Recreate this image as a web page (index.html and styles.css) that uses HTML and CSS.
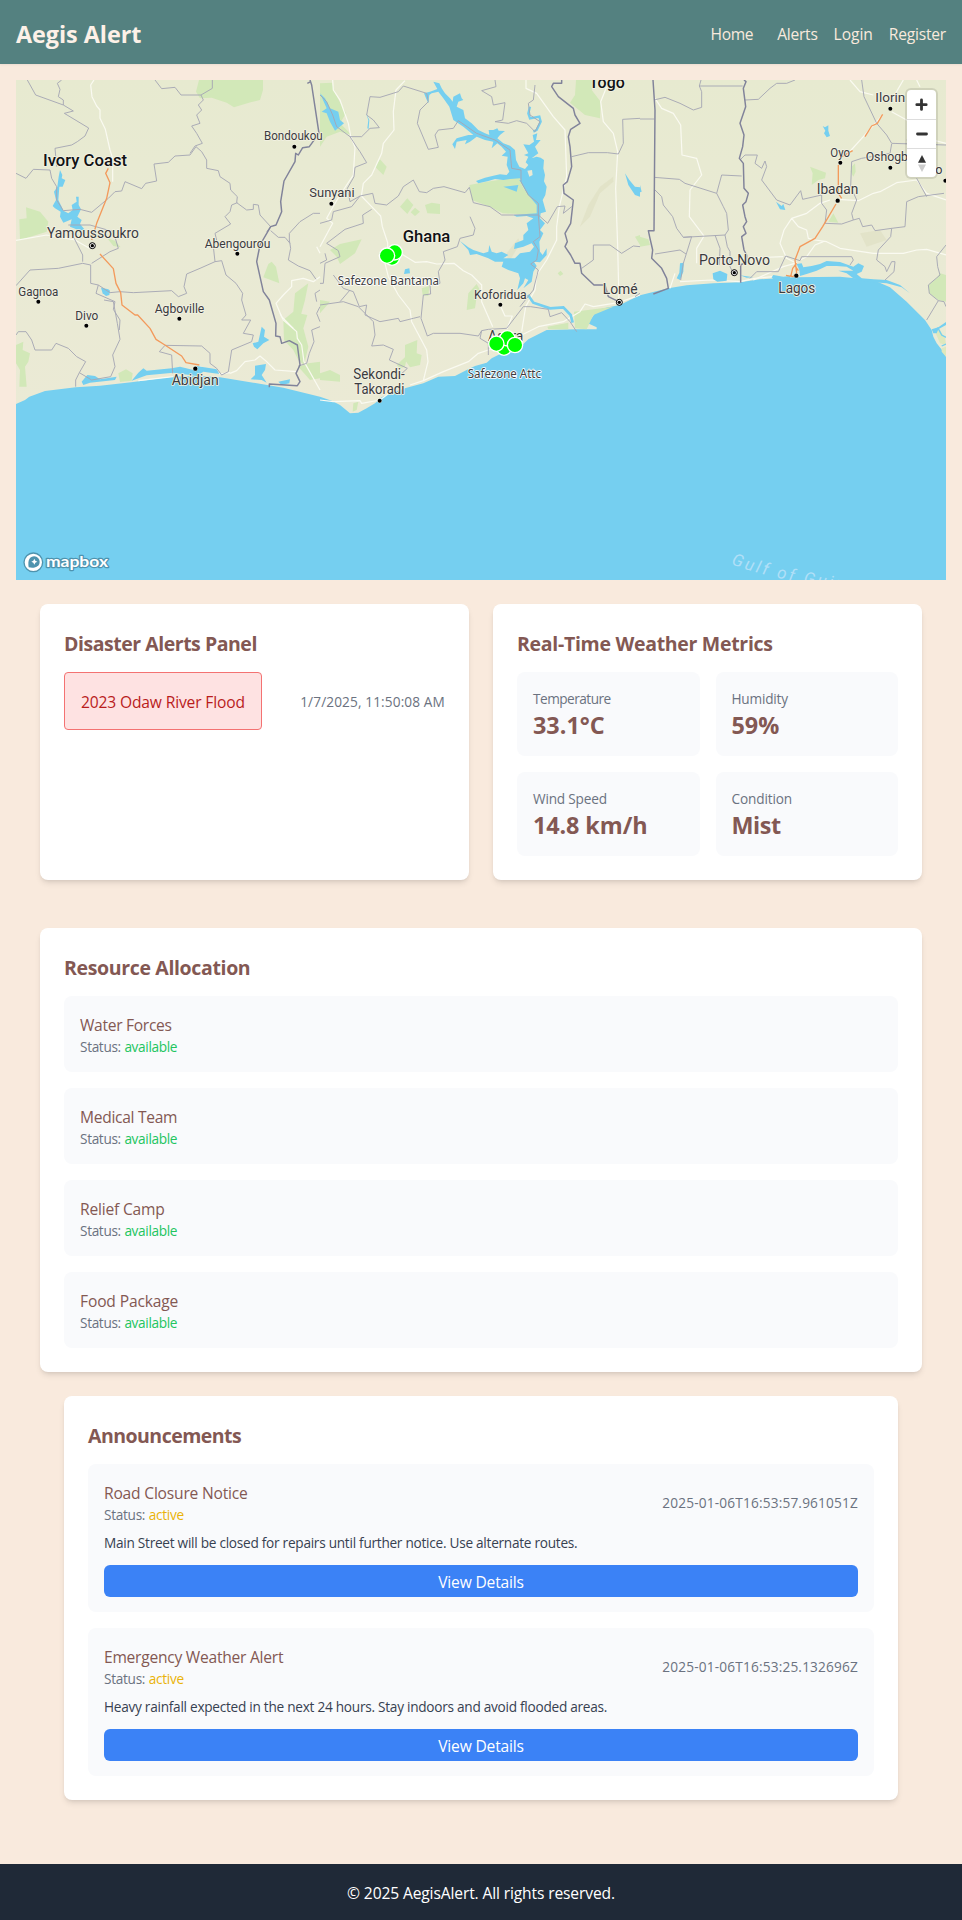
FILE: index.html
```html
<!DOCTYPE html>
<html lang="en">
<head>
<meta charset="utf-8">
<title>Aegis Alert</title>
<link rel="stylesheet" href="styles.css">
</head>
<body>
<header class="navbar">
  <h1 class="brand">Aegis Alert</h1>
  <nav class="nav">
    <a class="nav-link nav-home">Home</a>
    <a class="nav-link nav-alerts">Alerts</a>
    <a class="nav-link nav-login">Login</a>
    <a class="nav-link nav-register">Register</a>
  </nav>
</header>

<main>
  <section class="map">
    <svg class="map-canvas" viewBox="48 240 2790 1500" preserveAspectRatio="none">
      <defs>
        <linearGradient id="land" x1="0" y1="0" x2="0" y2="1">
          <stop offset="0" stop-color="#e7ead0"/><stop offset=".5" stop-color="#e9ead4"/><stop offset="1" stop-color="#ebead5"/>
        </linearGradient>
      </defs>
      <rect x="48" y="240" width="2790" height="1500" fill="#75cff0"/>
      <path fill="url(#land)" d="M48 240H2838V1070L2826 1050L2810 1030L2800 1010L2795 990L2775 960L2720 905L2670 862L2620 840L2520 830L2380 832L2280 838L2220 847L2140 850L2060 856L2005 865L1920 886L1890 900L1860 915L1825 922L1800 928L1785 940L1775 955L1760 968L1790 982L1790 988L1730 988L1640 990L1585 1018L1570 1032L1505 1060L1475 1075L1460 1088L1425 1098L1400 1110L1365 1128L1315 1130L1270 1150L1220 1163L1175 1178L1145 1192L1125 1210L1100 1225L1075 1238L1050 1240L1020 1215L995 1202L960 1190L850 1163L760 1148L660 1132L600 1128L515 1130L400 1146L300 1157L227 1162L135 1173L88 1190L75 1200L48 1212Z"/>

      <g class="park">
        <path d="M597 240H789V270L780 300L752 307L702 322L680 308L635 293L600 295L588 275Z"/>
        <path d="M78 622L120 635L145 665L140 695L60 720L58 658L80 655Z"/>
        <path d="M322 715L345 722L362 742L340 738Z"/>
        <path d="M815 785L828 800L838 850L790 832L805 792Z"/>
        <path d="M925 850L915 900L900 955L870 968L850 960L880 935L885 880Z"/>
        <path d="M48 1035L70 1025L68 1050L90 1060L85 1085L75 1100L80 1160H58L60 1110L48 1090Z"/>
        <path d="M355 1120L378 1108L398 1120L395 1142L360 1146Z"/>
        <path d="M895 940L922 945L910 985L925 1040L912 1095L895 1080L880 1050L852 1020L850 960Z"/>
        <path d="M925 1090L960 1085V1135L930 1140L895 1100Z"/>
      </g>
      <g class="park" transform="translate(960 180)">
        <path d="M0 70L36 68L45 100L78 160L60 190L95 225L60 215L20 230L0 260Z"/>
        <path d="M165 320L180 298L200 320L190 345Z"/>
        <path d="M240 440L262 415L280 435L262 462ZM272 457L285 443L300 455L285 468ZM315 435L335 428L360 432V462L322 460Z"/>
        <path d="M448 375L500 365L600 350L610 385L655 430L655 465L548 460L510 440L455 420Z"/>
        <path d="M768 60H828L815 90L842 125L840 175L795 165L750 128L765 105Z"/>
        <path d="M30 570L60 552L125 538L105 580L60 612L50 590Z"/>
        <path d="M0 720L30 725L0 760ZM305 685L328 678L325 708L308 705Z"/>
        <path d="M470 672L480 690L470 710L465 745L440 750L445 700Z"/>
        <path d="M713 640L722 632L730 642L720 648ZM945 530L960 525V555Z"/>
        <path d="M762 755L880 740L820 765L800 808L765 805ZM682 800L745 788L745 808H685Z"/>
        <path d="M255 855L292 840L290 880L305 885L300 915L270 922L255 900ZM0 940L30 930L60 945V965L0 960ZM230 915L262 885L255 920L240 925ZM100 1030L115 1025L110 1050L98 1055Z"/>
      </g>
      <g class="park" transform="translate(1920 0)">
        <path d="M510 500L558 518L555 535L535 540L515 555L518 520ZM635 500L645 490L647 515L640 530L632 515Z"/>
        <path d="M565 665L580 640L595 668ZM0 710L25 718L30 735L0 740ZM865 855L890 835L900 820L918 825V905L895 900L868 880Z"/>
        <path fill="#dfe8bd" d="M883 990L900 990L915 1015L918 1035L900 1030ZM905 1045L918 1040V1070L905 1055Z"/>
      </g>
      <g fill="#d7d7b4" opacity=".35">
        <path d="M1740 680L1765 615L1800 560L1840 530L1840 545L1800 580L1770 650ZM1520 760L1555 715L1560 730L1525 790ZM2580 700L2640 690L2660 720L2600 740Z"/>
      </g>

      <g class="road">
        <path d="M282 240L272 255L276 290L290 318L300 330V355L316 388L330 450L338 475V545M48 721L140 705L225 720L268 745M960 760L950 740M960 830L940 845L910 835L875 842V860L850 885L828 910L845 950L880 985"/>
        <path d="M840 940L850 960L890 995L892 1015L905 1035L912 1085L960 1170M690 1120L710 1112L735 1085L765 1080L780 1068L800 1085L825 1110L890 1115M415 1142L520 1130M600 1100L660 1122L690 1118"/>
      </g>
      <g class="road" transform="translate(960 180)">
        <path d="M38 60L40 90L60 120L85 190L92 228L105 262L100 345L60 405L45 430L20 475L38 490L0 560M255 62L228 90L220 155L222 210L190 250L185 280L155 345L130 370L124 408L155 440L182 468L187 500L203 548V590"/>
        <path d="M245 582L285 607L320 605L350 612L402 610L430 632L455 645L485 675L485 725L518 800M195 610L205 650L235 705L270 750L275 785L320 870L324 905L310 962L270 975M203 590L195 615"/>
        <path d="M540 735L555 768H577L560 808M605 815L617 740L645 690L650 645L680 600L710 540L710 500L718 440L740 350L735 210L700 170L650 100L618 85V60M605 825L655 800L730 785L780 755L795 732L820 740L895 728L960 705"/>
        <path d="M860 80L842 125L850 185L880 220L893 275L887 385L893 560L897 725M310 962L370 935L445 905L475 880L505 870L525 865M0 1020L40 1025L120 1022L125 1030L180 1020L240 975"/>
      </g>
      <g class="road" transform="translate(1920 0)">
        <path d="M45 295L65 325L100 340L122 375L126 465L170 475L185 525L150 570L148 650L192 708L170 745V790M105 820L90 865M120 845L215 840L300 845L345 835L400 830"/>
        <path d="M728 345L670 410L620 465M790 240L755 300M630 240L660 275L700 285M755 335L800 360L840 410L918 430M830 240L840 260M595 598L655 602L700 580L720 575L770 548L830 540L860 580L918 600"/>
        <path d="M570 600L540 610L500 640L455 655L432 690L420 730L440 775L470 790M455 655L475 680L500 690L505 715L525 720M525 720L560 725L600 745L700 760L790 760L830 750L860 748L918 765M305 775L430 770M340 840L430 800L465 790M480 780L500 770L525 735L550 725"/>
      </g>

      <g class="lake">
        <path d="M180 510L187 525L185 535L196 540L188 560H178L175 600L185 620L190 632L205 640L218 630L215 615L230 605L228 590H236V615L243 628L232 650L245 660L240 672L255 690H235L210 680L215 658L190 668L180 650L182 635L165 625L158 618L168 600L162 575L172 560L176 530Z"/>
        <path d="M303 863L325 868L330 872L328 885L318 888L308 880Z"/>
        <path d="M785 980L795 990L792 1010L808 1020L790 1030L772 1048L762 1040L758 1030L775 1025Z"/>
        <path d="M765 1097L798 1092L795 1110L785 1125L800 1148L785 1140L752 1138L765 1125ZM835 1145L870 1138L868 1150L845 1155Z"/>
        <path d="M245 1145L262 1125L285 1128L300 1138L350 1130L345 1140L270 1148L250 1155ZM395 1142L415 1118L430 1105L440 1112L515 1105L540 1100L580 1110L590 1098L650 1108L658 1122L610 1115L590 1128L520 1118L440 1126Z"/>
      </g>
      <g class="lake" transform="translate(960 180)">
        <path d="M0 100L15 115L30 145L55 155L60 180L72 190L45 212L30 185L20 160L5 155L20 145Z"/>
        <path d="M255 628L268 625L270 640L252 642ZM915 340L928 360L945 380L960 382V410L945 405L925 375ZM550 380L595 375L590 395Z"/>
        <path d="M138 160L145 180L142 205L150 208L146 205L148 180Z"/>
      </g>
      <path class="lake" transform="translate(1230 225)" d="M70 20L88 25L95 40L105 55L120 70L128 80L130 65L150 55L155 70L160 75L145 80L140 95L160 105L165 130L185 145L205 165L225 175L238 180L236 165L250 165L262 160L266 167L285 168L270 180L262 190L280 205L300 212L315 225L318 255L328 275L345 282L355 270L347 262L355 245L342 240L355 235L340 208L358 210L372 200L368 180L382 175L378 195L392 195L375 215L385 235L365 250L380 245L392 248L402 255L400 280L405 300L400 330L405 345V362H356L340 335L330 310L300 312L280 315L255 312L235 318L205 325L198 318L225 308L250 302L270 298L290 300L298 290L290 270L293 245L275 242L288 230L275 215L262 205L245 220L250 200L225 195L200 185L180 200L165 208L170 195L140 200L135 222L127 208L140 190L175 180L190 180L160 155L130 135L118 95L100 70L85 50L65 55L58 60L55 85L48 70L42 55L60 50L82 42Z"/>
      <path class="lake" transform="translate(1320 540)" d="M238 0L265 45L290 75V100L220 105L230 110L260 108L280 115L260 130L265 150L250 165V180L225 190L222 207L250 200L275 190L282 200L270 215L240 220L225 235L190 235L205 225L185 215L170 220L155 215L148 195L145 215L130 220L100 210L85 202L60 183L85 210L90 225L110 222L145 235L165 245L190 245L185 260L205 270L235 280L240 295L232 330L250 310L255 295L265 300L250 325L275 305L280 275L290 258L282 245L300 247L320 225V205L308 225L300 215L298 185L310 160L300 150L315 130L300 115L302 100L318 95L308 60L316 45L320 20L310 0Z"/>
      <path d="M1590 320L1585 340L1590 355L1618 350L1622 365L1610 390L1600 395" fill="none" stroke="#75cff0" stroke-width="7"/>
      <path d="M1584 885L1600 908L1650 925L1690 922L1712 945L1718 968" fill="none" stroke="#75cff0" stroke-width="8"/>
      <path fill="#e9ead4" d="M1582 512L1596 510L1598 525L1588 530Z"/>
      <g class="lake" transform="translate(1920 0)">
        <path d="M0 555L5 575L0 577ZM548 378L555 382L565 376V392L570 408L560 412L552 400L556 392ZM408 605L425 618L430 612L436 630L420 628Z"/>
        <path d="M120 790L131 788L130 815L120 840L110 835L118 818ZM218 820L240 812L262 822L260 842L232 845L220 838ZM300 826L340 832L320 833ZM395 832L400 825L430 830L450 828V838H400Z"/>
        <path d="M470 792L485 790L490 802L515 798L540 792L560 783L600 786L640 800L655 790L672 798L665 815L650 822L665 835L700 838L740 840L780 855L810 880L785 862L740 850L680 845L640 835L620 820L595 812L640 812L620 800L590 798L560 798L530 812L500 822L480 828L478 810Z"/>
        <path d="M875 988L895 982L918 966V975L895 988L890 1000L880 1000Z"/>
      </g>
      <g fill="none" stroke="#75cff0" stroke-width="4" transform="translate(1920 0)"><path d="M893 982L905 1005L918 1012M905 1038L918 1032"/></g>

      <g class="border">
        <path d="M82 240L107 285L190 315L220 333L193 340L266 384L255 408L232 425L215 435L165 445L170 500M185 240L172 250L180 268L175 290L190 300L190 315M48 520L78 535L100 508L150 510L155 535L170 560V600L190 632L240 628L275 637L325 595L345 575L365 573L375 545L425 566L437 550L470 543L462 492L505 487L525 468L570 465L588 440L605 455L620 480V505L655 512L660 530L690 550L692 570L712 590L710 608L740 630L760 628V613L775 615L780 645L812 680L800 695"/>
        <path d="M465 240L485 266L525 262L543 285H603L637 265V240M603 285L610 300L595 315L605 330L590 345L600 370L575 378L590 400L607 430L585 438L570 460M712 608L695 615L690 635L675 650L692 672L645 700L650 720L640 740L645 785L600 805L560 822L552 860L560 880L535 890L515 872L400 878L360 875L330 878L295 855L272 850V795L248 790L175 805L90 810L48 857M645 785L665 782L678 825L708 850L728 880L725 900L738 945L725 960H752L730 1000L760 1005L755 1025L695 1050L685 1115L665 1125L650 1105L630 1090V1060L605 1038L495 1036L478 1055L515 1065L518 1120"/>
        <path d="M205 675L270 675L340 695L355 745L330 755L275 790M215 700L248 765V785M295 855L288 880L345 905L340 928L360 960L358 990M312 900L340 905L352 970L360 1018L338 1065L345 1100L332 1130L275 1140L238 1118L257 1085L230 1070L205 1045L168 1030L155 1050H105L95 1020L78 995L55 995L48 1005M238 1118L227 1140V1160"/>
        <path d="M960 640L940 640L900 665L868 700V720L872 745L865 780L895 798L930 812L948 838M812 692L835 712H855L870 730M960 920L950 940L960 965M960 870L945 880L950 905M960 980L935 990L942 1025L928 1060L920 1090L895 1098"/>
      </g>
      <g class="border" transform="translate(960 180)">
        <path d="M0 105L20 125L38 165L50 200L90 230L108 258L120 275L140 308L105 322L102 350L82 385L90 425L120 408L158 400L165 430L200 435L235 408L250 380L280 360L298 395L320 398L340 385L372 380L435 398L448 382L460 428L510 440L545 465L580 465L655 465L683 490L712 440L735 438L730 460L755 440M90 230H125L150 205L178 203L160 180L140 165L150 110L180 112L235 95L250 78L320 100L325 125L300 150L292 190L325 268L355 262L345 225L355 210L400 205L415 182L470 220L525 240L570 270L575 325L603 330V365L625 405L655 430V465L660 530L640 545L655 570L650 600L632 612L655 630L640 690L600 740"/>
        <path d="M525 60L528 80L485 92L515 110L520 135L555 128L548 180L525 185L565 190L590 182L620 190L645 215L660 185L630 165L625 130L640 120L645 75M450 470L465 505L460 525L420 535L412 560L370 575L375 600L355 635L360 670L330 675L332 702L310 705L303 775L322 828L340 820L420 820L475 828L485 812L505 808L560 805L610 740L632 740L685 748L690 770L725 758L750 785L770 815M0 670L10 670L15 610L60 590L55 572L20 550L75 508L130 490L128 465L155 448M0 610L20 600L15 580M120 408L95 440L40 455L35 480L0 490"/>
        <path d="M40 645L70 685L100 695L118 740L140 735L135 765L180 785L235 775L240 785L280 775L300 770M0 735L70 725L115 740L160 785L165 825L155 858L190 855L220 868L208 900L262 925L235 950M60 725L90 690M485 812L480 835L505 850V885M820 555H870L905 580L940 558L960 560M820 555V600L785 625M755 290L805 278H862L895 282L910 250L908 178L960 175M960 700L945 710"/>
      </g>
      <g class="border" transform="translate(1920 0)">
        <path d="M42 300L75 292L120 310L160 330L185 322V275L178 258L183 240M178 258H308M0 357H42M42 532L118 538L135 550L230 580L245 525L305 528M230 580L250 620L260 640L265 690L255 705L130 712L155 710L130 790L122 840M45 570L65 590L70 615L98 650L110 685L130 712M45 762L120 750L138 762M225 705L240 745L238 795M255 705L262 740L270 755V800L280 820M315 300L355 298L390 265L410 250L440 250L465 240M665 240L672 290L710 370L740 405L755 430L918 435M300 480L315 465L352 465L345 490L365 505L375 483L380 500L365 540L410 600L450 615L482 572L488 598L545 585V610L560 630L555 670L605 672L640 660L635 640L650 600L632 560L635 485L665 475L750 460L755 432"/>
        <path d="M640 660L658 655L668 680L695 675L705 692L755 685L752 710L715 750L710 780L735 800L740 815L755 785H765L762 815L735 840M755 685L795 680L800 605L835 590L912 580M860 590L830 535M918 735L890 770L893 800L900 825L865 855L868 880L895 902L912 905L918 920M895 902L860 960M330 835L350 815H415L437 768L480 782L485 770H635L640 780L630 795M800 420L835 430L880 435"/>
      </g>
      <g class="nation">
        <path d="M930 240L935 255L957 400M922 250L932 245M957 400L928 440L908 443L895 465L887 460L885 485L852 543L842 605L845 635L828 675L812 680L780 735L770 785L790 875L808 900L828 970L827 1008L840 1010L845 1030L868 1022L892 1035L900 1095L888 1120L900 1145L892 1157L808 1152V1162"/>
        <g transform="translate(960 180)"><path d="M725 60V70H700L695 80L715 110L760 145L765 165L780 190L752 208L745 230L750 260L755 320L742 365L730 375L732 400L760 420L752 490L735 520L742 545L735 560L752 585L765 610H780L785 640L822 675H855L865 710L890 722"/></g>
        <g transform="translate(1920 0)"><path d="M39 240L45 330L42 692H25L30 715L38 750L35 775L65 805L80 835L85 865L40 882M312 240L318 245L310 265L317 320L300 370L312 405L308 440L298 475L310 490L312 565L325 580L318 605L308 615L315 650L320 665L310 680L318 700L305 710L312 750L320 765V785L302 795V848"/></g>
      </g>

      <g class="highway">
        <path d="M325 505L317 520L330 548L320 595L290 670L275 720M300 762L340 806L348 850L362 878L366 915L405 945H413L450 985L468 1018L490 1032L545 1068L558 1088L598 1095"/>
        <g transform="translate(1920 0)"><path d="M728 343L712 370L695 378L675 410M638 452L605 470M595 495V580L605 595M588 612L548 680L525 715L480 740L465 780L470 820L458 830L438 826M470 790L458 805L452 830M463 795L475 812"/></g>
      </g>

      <g class="city-dots">
        <circle cx="883" cy="440" r="6"/><circle cx="712" cy="761" r="6"/><circle cx="115" cy="905" r="6"/><circle cx="538" cy="956" r="6"/><circle cx="259" cy="977" r="6"/><circle cx="586" cy="1106" r="6.5"/><circle cx="994" cy="611" r="6"/><circle cx="1501" cy="914" r="6"/><circle cx="1139" cy="1202" r="6"/><circle cx="2671" cy="326" r="6"/><circle cx="2521" cy="488" r="6"/><circle cx="2671" cy="503" r="6"/><circle cx="2513" cy="602" r="6.5"/><circle cx="2389" cy="827" r="6.5"/><circle cx="2836" cy="542" r="6"/>
      </g>
      <g class="capitals">
        <circle cx="277" cy="737" r="9"/><circle cx="1858" cy="907" r="9"/><circle cx="2203" cy="818" r="9"/>
      </g>
      <g class="capital-cores">
        <circle cx="277" cy="737" r="5"/><circle cx="1858" cy="907" r="5"/><circle cx="2203" cy="818" r="5"/>
      </g>

      <g class="labels">
        <text x="792" y="421" textLength="176" lengthAdjust="spacingAndGlyphs">Bondoukou</text>
        <text x="614" y="743" textLength="197" lengthAdjust="spacingAndGlyphs">Abengourou</text>
        <text x="55" y="889" textLength="120" lengthAdjust="spacingAndGlyphs">Gagnoa</text>
        <text x="464" y="938" textLength="149" lengthAdjust="spacingAndGlyphs">Agboville</text>
        <text x="226" y="960" textLength="69" lengthAdjust="spacingAndGlyphs">Divo</text>
        <text x="928" y="592" textLength="136" lengthAdjust="spacingAndGlyphs">Sunyani</text>
        <text x="1422" y="897" textLength="158" lengthAdjust="spacingAndGlyphs">Koforidua</text>
        <text x="2626" y="307" textLength="90" lengthAdjust="spacingAndGlyphs">Ilorin</text>
        <text x="2491" y="471" textLength="59" lengthAdjust="spacingAndGlyphs">Oyo</text>
        <text x="2597" y="484" textLength="148" lengthAdjust="spacingAndGlyphs">Oshogbo</text>
        <text x="2806" y="522">o</text>
        <g class="labels-mid">
          <text x="141" y="715" textLength="276" lengthAdjust="spacingAndGlyphs">Yamoussoukro</text>
          <text x="515" y="1155" textLength="141" lengthAdjust="spacingAndGlyphs">Abidjan</text>
          <text x="1808" y="883" textLength="105" lengthAdjust="spacingAndGlyphs">Lomé</text>
          <text x="2097" y="795" textLength="213" lengthAdjust="spacingAndGlyphs">Porto-Novo</text>
          <text x="2335" y="878" textLength="111" lengthAdjust="spacingAndGlyphs">Lagos</text>
          <text x="2450" y="581" textLength="125" lengthAdjust="spacingAndGlyphs">Ibadan</text>
          <text x="1060" y="1138" textLength="154" lengthAdjust="spacingAndGlyphs">Sekondi-</text>
          <text x="1063" y="1182" textLength="150" lengthAdjust="spacingAndGlyphs">Takoradi</text>
          <text x="1464" y="1022" textLength="106" lengthAdjust="spacingAndGlyphs">Accra</text>
        </g>
        <g class="labels-country">
          <text x="129" y="498" textLength="252" lengthAdjust="spacingAndGlyphs">Ivory Coast</text>
          <text x="1208" y="725" textLength="143" lengthAdjust="spacingAndGlyphs">Ghana</text>
          <text x="1767" y="264" textLength="107" lengthAdjust="spacingAndGlyphs">Togo</text>
        </g>
      </g>

      <g class="pins">
        <circle cx="1176" cy="773" r="23"/><circle cx="1184" cy="757" r="23"/><circle cx="1161" cy="767" r="23"/>
        <circle cx="1512" cy="1043" r="23"/><circle cx="1522" cy="1015" r="23"/><circle cx="1489" cy="1031" r="23"/><circle cx="1545" cy="1035" r="23"/>
      </g>
      <g class="pin-labels">
        <text x="1013" y="855" textLength="304" lengthAdjust="spacingAndGlyphs">Safezone Bantama</text>
        <text x="1403" y="1133" textLength="220" lengthAdjust="spacingAndGlyphs">Safezone Attc</text>
      </g>
      <path id="gulf" d="M2192 1692Q2350 1752 2640 1782" fill="none"/>
      <text class="sea-label"><textPath href="#gulf">Gulf of Guinea</textPath></text>

      <g class="logo">
        <circle cx="100" cy="1687" r="28" fill="#fff" stroke="#4e93ae" stroke-width="4"/>
        <path d="M86 1702C82 1680 90 1669 103 1669A16 16 0 0 1 119 1685C119 1698 107 1706 86 1702Z" fill="#4e93ae"/>
        <path d="M103 1676L106 1682L112 1685L106 1688L103 1694L100 1688L94 1685L100 1682Z" fill="#fff"/>
        <text x="138" y="1701" textLength="186" lengthAdjust="spacingAndGlyphs">mapbox</text>
      </g>
    </svg>
    <div class="map-controls">
      <button class="map-button"><svg width="29" height="29" viewBox="0 0 29 29"><path d="M14.5 10V19.4M9.8 14.7H19.2" stroke="#333" stroke-width="2.8" stroke-linecap="round"/></svg></button>
      <button class="map-button"><svg width="29" height="28" viewBox="0 0 29 28"><path d="M10.5 14H19.5" stroke="#333" stroke-width="2.8" stroke-linecap="round"/></svg></button>
      <button class="map-button"><svg width="29" height="28" viewBox="0 0 29 28"><path d="M11 13.7L15 6.1L19 13.7Z" fill="#333"/><path d="M11 15.5L15 23.1L19 15.5Z" fill="#ccc"/></svg></button>
    </div>
  </section>

  <div class="overview">
    <section class="card">
      <h2 class="card-title ls-47">Disaster Alerts Panel</h2>
      <div class="alert-row">
        <div class="alert-box"><span class="ls-15">2023 Odaw River Flood</span></div>
        <span class="muted date-local">1/7/2025, 11:50:08 AM</span>
      </div>
    </section>
    <section class="card">
      <h2 class="card-title ls-30">Real-Time Weather Metrics</h2>
      <div class="metrics">
        <div class="tile"><p class="muted ls-55">Temperature</p><p class="metric">33.1°C</p></div>
        <div class="tile"><p class="muted ls-20">Humidity</p><p class="metric">59%</p></div>
        <div class="tile"><p class="muted ls-20">Wind Speed</p><p class="metric ls-10">14.8 km/h</p></div>
        <div class="tile"><p class="muted ls-15">Condition</p><p class="metric ls-47">Mist</p></div>
      </div>
    </section>
  </div>

  <section class="card resources">
    <h2 class="card-title ls-35">Resource Allocation</h2>
    <div class="list">
      <div class="tile"><h3 class="item-title ls-30">Water Forces</h3><p class="muted ls-35">Status: <span class="available">available</span></p></div>
      <div class="tile"><h3 class="item-title ls-30">Medical Team</h3><p class="muted ls-35">Status: <span class="available">available</span></p></div>
      <div class="tile"><h3 class="item-title ls-20">Relief Camp</h3><p class="muted ls-35">Status: <span class="available">available</span></p></div>
      <div class="tile"><h3 class="item-title ls-15">Food Package</h3><p class="muted ls-35">Status: <span class="available">available</span></p></div>
    </div>
  </section>

  <section class="card announcements">
    <h2 class="card-title ls-55">Announcements</h2>
    <div class="list">
      <article class="tile">
        <div class="notice-head">
          <div><h3 class="item-title ls-20">Road Closure Notice</h3><p class="muted ls-30">Status: <span class="active">active</span></p></div>
          <span class="muted date-iso">2025-01-06T16:53:57.961051Z</span>
        </div>
        <p class="notice-text">Main Street will be closed for repairs until further notice. Use alternate routes.</p>
        <button class="details-button">View Details</button>
      </article>
      <article class="tile">
        <div class="notice-head">
          <div><h3 class="item-title ls-25">Emergency Weather Alert</h3><p class="muted ls-30">Status: <span class="active">active</span></p></div>
          <span class="muted date-iso">2025-01-06T16:53:25.132696Z</span>
        </div>
        <p class="notice-text">Heavy rainfall expected in the next 24 hours. Stay indoors and avoid flooded areas.</p>
        <button class="details-button">View Details</button>
      </article>
    </div>
  </section>
</main>

<footer class="footer">© 2025 AegisAlert. All rights reserved.</footer>
</body>
</html>
```

FILE: styles.css
```css
* { box-sizing: border-box; margin: 0; padding: 0; }

body {
  background: #f9eadd;
  font-family: "Segoe UI", "Open Sans", "Noto Sans", sans-serif;
  font-size: 15.6px;
  line-height: 24px;
}

button { border: 0; background: none; font: inherit; }

.navbar {
  display: flex;
  justify-content: space-between;
  align-items: center;
  height: 64px;
  padding: 3px 16px 0;
  background: #548180;
  box-shadow: 0 1px 2px rgba(0, 0, 0, .06);
  color: #fdf1e8;
}
.brand { font-size: 23.4px; line-height: 32px; letter-spacing: -.05px; }
.nav { display: flex; gap: 16px; }
.nav-link { color: #f9eadd; }
.nav-home { margin-right: 8px; letter-spacing: -.35px; }
.nav-alerts { letter-spacing: -.25px; }
.nav-login { letter-spacing: -.05px; }
.nav-register { letter-spacing: -.22px; }

.map {
  position: relative;
  height: 500px;
  margin: 16px 16px 24px;
  overflow: hidden;
}
.map-canvas { display: block; width: 100%; height: 100%; }
.park { fill: #d2e8b8; }
.lake { fill: #75cff0; }
.road { fill: none; stroke: #fafaf1; stroke-width: 3.6; stroke-linejoin: round; }
.border { fill: none; stroke: #a6a7b4; stroke-width: 2.8; }
.nation { fill: none; stroke: #81839a; stroke-width: 4.4; stroke-linejoin: round; }
.highway { fill: none; stroke: #f39a5c; stroke-width: 4; stroke-linejoin: round; }
.city-dots { fill: #000; stroke: #f7f6ea; stroke-width: 3; paint-order: stroke; }
.capitals { fill: #fff; stroke: #000; stroke-width: 3; }
.capital-cores { fill: #000; }
.labels {
  font-family: Roboto, sans-serif;
  font-size: 38px;
  fill: #3b3b40;
  stroke: #f3f2e4;
  stroke-width: 5;
  stroke-linejoin: round;
  paint-order: stroke;
}
.labels-mid { font-size: 43px; }
.labels-country { font-size: 51px; font-weight: 500; fill: #101114; }
.pins { fill: #0f0; stroke: #fff; stroke-width: 4; }
.pin-labels {
  font-family: "Noto Sans", sans-serif;
  font-size: 37px;
  fill: #3c3c40;
  stroke: #fff;
  stroke-width: 5;
  stroke-linejoin: round;
  paint-order: stroke;
}
.sea-label {
  font-family: Roboto, sans-serif;
  font-size: 51px;
  font-style: italic;
  letter-spacing: 8px;
  fill: #b0dff7;
}
.logo text {
  font-family: Lato, sans-serif;
  font-size: 46px;
  font-weight: 700;
  fill: #fff;
  stroke: #4e93ae;
  stroke-width: 7;
  stroke-linejoin: round;
  paint-order: stroke;
}

.map-controls {
  position: absolute;
  top: 10px;
  right: 10px;
  display: flex;
  flex-direction: column;
  width: 29px;
  border-radius: 4px;
  background: #fff;
  box-shadow: 0 0 0 2px rgba(0, 0, 0, .1);
}
.map-button { display: block; width: 29px; height: 29px; }
.map-button svg { display: block; }
.map-button + .map-button { border-top: 1px solid #ddd; }

.overview {
  display: grid;
  grid-template-columns: 1fr 1fr;
  gap: 24px;
  margin: 0 40px 48px;
}
.card {
  padding: 24px;
  border-radius: 8px;
  background: #fff;
  box-shadow: 0 4px 6px -1px rgba(0, 0, 0, .1), 0 2px 4px -2px rgba(0, 0, 0, .1);
}
.card-title {
  margin-bottom: 16px;
  padding-top: 2px;
  height: 28px;
  font-size: 19.5px;
  line-height: 28px;
  color: #835853;
}
.resources { margin: 0 40px 24px; }
.announcements { margin: 0 64px 64px; }

.alert-row { display: flex; justify-content: space-between; align-items: center; }
.alert-box {
  width: 198px;
  height: 58px;
  padding: 17px 16px 15px;
  border: 1px solid #f47272;
  border-radius: 4px;
  background: #fee2e2;
  color: #b91c1c;
  white-space: nowrap;
}

.tile { padding: 17px 16px 15px; border-radius: 8px; background: #f9fafc; }
.metrics { display: grid; grid-template-columns: 1fr 1fr; gap: 16px; }
.metric { font-size: 23.4px; line-height: 32px; font-weight: 700; color: #835853; }
.muted { font-size: 13.65px; line-height: 20px; color: #6b7280; }
.date-local { padding-top: 2px; letter-spacing: .12px; }
.date-iso { letter-spacing: .18px; }

.list { display: grid; gap: 16px; }
.item-title { font-size: 15.6px; line-height: 24px; font-weight: 400; color: #835853; }
.available, .active { margin-left: .4px; }
.available { color: #22c55e; }
.active { color: #eab308; }

.notice-head { display: flex; justify-content: space-between; align-items: center; }
.notice-text {
  margin: 8px 0 12px;
  font-size: 13.65px;
  line-height: 20px;
  letter-spacing: -.27px;
  color: #374151;
}
.details-button {
  display: block;
  width: 100%;
  height: 32px;
  padding-top: 2px;
  border-radius: 6px;
  background: #3b82f6;
  color: #fff;
  letter-spacing: -.19px;
}

.footer {
  height: 56px;
  padding: 17px 16px 15px;
  background: #1f2937;
  color: #fff;
  text-align: center;
  letter-spacing: -.13px;
}

/* Letter-spacing steps, in hundredths of a pixel */
.ls-10 { letter-spacing: -.1px; }
.ls-15 { letter-spacing: -.15px; }
.ls-20 { letter-spacing: -.2px; }
.ls-25 { letter-spacing: -.25px; }
.ls-30 { letter-spacing: -.3px; }
.ls-35 { letter-spacing: -.35px; }
.ls-47 { letter-spacing: -.47px; }
.ls-55 { letter-spacing: -.52px; }
```
